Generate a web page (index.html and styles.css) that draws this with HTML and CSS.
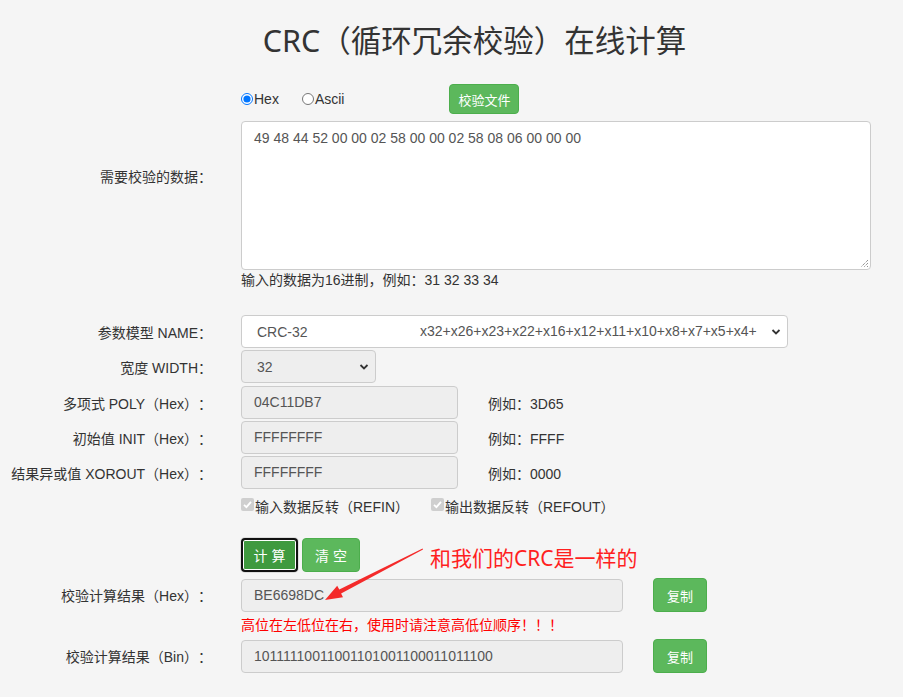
FILE: index.html
```html
<!DOCTYPE html>
<html lang="zh-CN">
<head>
<meta charset="utf-8">
<title>CRC（循环冗余校验）在线计算</title>
<link rel="stylesheet" href="styles.css">
</head>
<body>
<div class="page">
  <h1 class="title">CRC（循环冗余校验）在线计算</h1>

  <div class="row row-data">
    <div class="label label-data">需要校验的数据：</div>
    <div class="ctrl">
      <div class="radio-row">
        <label class="radio"><input type="radio" name="fmt" checked>Hex</label>
        <label class="radio radio-ascii"><input type="radio" name="fmt">Ascii</label>
        <button class="btn btn-file">校验文件</button>
      </div>
      <div class="textarea">49 48 44 52 00 00 02 58 00 00 02 58 08 06 00 00 00
        <svg class="grip" width="10" height="10" viewBox="0 0 10 10"><path d="M9 2 L2 9 M9 5 L5 9 M9 8 L8 9" stroke="#666" stroke-width="1" stroke-dasharray="1 1"/></svg>
      </div>
      <div class="help">输入的数据为16进制，例如：31 32 33 34</div>
    </div>
  </div>

  <div class="row row-name">
    <div class="label">参数模型 NAME：</div>
    <div class="ctrl">
      <div class="select select-name">
        <span class="sel-main">CRC-32</span>
        <span class="sel-poly">x32+x26+x23+x22+x16+x12+x11+x10+x8+x7+x5+x4+</span>
        <svg class="chev" width="10" height="8" viewBox="0 0 10 8"><path d="M1.5 2 L5 5.5 L8.5 2" fill="none" stroke="#333" stroke-width="1.8"/></svg>
      </div>
    </div>
  </div>

  <div class="row row-width">
    <div class="label">宽度 WIDTH：</div>
    <div class="ctrl">
      <div class="select select-width">
        <span class="sel-main">32</span>
        <svg class="chev" width="10" height="8" viewBox="0 0 10 8"><path d="M1.5 2 L5 5.5 L8.5 2" fill="none" stroke="#333" stroke-width="1.8"/></svg>
      </div>
    </div>
  </div>

  <div class="row row-poly">
    <div class="label">多项式 POLY（Hex）：</div>
    <div class="ctrl">
      <div class="input input-short">04C11DB7</div>
      <span class="example">例如：3D65</span>
    </div>
  </div>

  <div class="row row-field">
    <div class="label">初始值 INIT（Hex）：</div>
    <div class="ctrl">
      <div class="input input-short">FFFFFFFF</div>
      <span class="example">例如：FFFF</span>
    </div>
  </div>

  <div class="row row-field">
    <div class="label">结果异或值 XOROUT（Hex）：</div>
    <div class="ctrl">
      <div class="input input-short">FFFFFFFF</div>
      <span class="example">例如：0000</span>
    </div>
  </div>

  <div class="row row-check">
    <div class="label"></div>
    <div class="ctrl">
      <label class="check check-in"><span class="cbox"><svg width="13" height="13" viewBox="0 0 13 13"><path d="M3 6.8 L5.4 9.2 L10 3.8" fill="none" stroke="#fff" stroke-width="1.8"/></svg></span>输入数据反转（REFIN）</label>
      <label class="check"><span class="cbox"><svg width="13" height="13" viewBox="0 0 13 13"><path d="M3 6.8 L5.4 9.2 L10 3.8" fill="none" stroke="#fff" stroke-width="1.8"/></svg></span>输出数据反转（REFOUT）</label>
    </div>
  </div>

  <div class="row row-btns">
    <div class="label"></div>
    <div class="ctrl">
      <button class="btn btn-calc">计 算</button>
      <button class="btn btn-clear">清 空</button>
      <span class="note">和我们的CRC是一样的</span>
      <svg class="arrow" width="110" height="60" viewBox="0 0 110 60"><polygon points="5,56 23,53.2 21.1,49.6 103,5.4 102.6,4.6 19.3,45.6 17.2,41.8" fill="#f42a2a"/></svg>
    </div>
  </div>

  <div class="row row-result">
    <div class="label">校验计算结果（Hex）：</div>
    <div class="ctrl">
      <div class="input input-result">BE6698DC</div>
      <button class="btn btn-copy">复制</button>
    </div>
  </div>
  <div class="row row-warn">
    <div class="label"></div>
    <div class="ctrl warn">高位在左低位在右，使用时请注意高低位顺序！！！</div>
  </div>

  <div class="row row-bin">
    <div class="label">校验计算结果（Bin）：</div>
    <div class="ctrl">
      <div class="input input-result">10111110011001101001100011011100</div>
      <button class="btn btn-copy">复制</button>
    </div>
  </div>
</div>
</body>
</html>
```

FILE: styles.css
```css
html, body {
  margin: 0;
  padding: 0;
  background: #f5f5f5;
}
body {
  font-family: "Liberation Sans", "Noto Sans CJK SC", sans-serif;
  font-size: 14px;
  color: #333;
  text-spacing-trim: space-all;
}
.page {
  width: 903px;
  height: 697px;
  overflow: hidden;
}
.title {
  margin: 20px 0 0 0;
  padding-left: 46px;
  height: 40px;
  line-height: 40px;
  text-align: center;
  font-family: "Noto Sans", "Noto Sans CJK SC", sans-serif;
  font-weight: normal;
  font-size: 30.5px;
  color: #333;
}
.row {
  display: flex;
  align-items: center;
}
.label {
  width: 212px;
  flex: none;
  text-align: right;
  margin-right: 29px;
  white-space: nowrap;
}
.ctrl {
  display: flex;
  align-items: center;
  position: relative;
}
.row-data {
  margin-top: 24px;
  align-items: flex-start;
}
.label-data {
  padding-top: 83px;
  line-height: 20px;
}
.row-data .ctrl {
  flex-direction: column;
  align-items: flex-start;
}
.radio-row {
  display: flex;
  align-items: center;
  height: 30px;
}
.radio {
  display: inline-flex;
  align-items: center;
  font-size: 14px;
  color: #333;
}
.radio input {
  margin: 0 1px 0 0;
  width: 12px;
  height: 12px;
}
.radio-ascii {
  margin-left: 23px;
}
.btn {
  border: 1px solid #4cae4c;
  background: #5cb85c;
  color: #fff;
  border-radius: 4px;
  font-family: "Liberation Sans", "Noto Sans CJK SC", sans-serif;
  font-size: 14px;
  padding: 0;
  cursor: pointer;
}
.btn-file {
  margin-left: 105px;
  width: 70px;
  height: 30px;
  font-size: 13px;
}
.textarea {
  position: relative;
  box-sizing: border-box;
  margin-top: 7px;
  width: 630px;
  height: 149px;
  background: #fff;
  border: 1px solid #ccc;
  border-radius: 4px;
  padding: 7px 12px;
  font-size: 14px;
  color: #555;
  line-height: 18px;
}
.grip {
  position: absolute;
  right: 1px;
  bottom: 1px;
}
.help {
  height: 20px;
  line-height: 20px;
  font-size: 14px;
  color: #333;
}
.row-name {
  margin-top: 25px;
}
.select {
  box-sizing: border-box;
  position: relative;
  display: flex;
  align-items: center;
  height: 33px;
  border: 1px solid #ccc;
  border-radius: 4px;
  color: #555;
  font-size: 14px;
}
.select-name {
  width: 547px;
  background: #fff;
  padding-left: 15px;
}
.sel-poly {
  position: absolute;
  left: 178px;
  top: 7px;
}
.select-width {
  width: 135px;
  background: #eee;
  padding-left: 15px;
}
.chev {
  position: absolute;
  right: 6px;
  top: 12px;
}
.row-width {
  margin-top: 2px;
}
.row-poly {
  margin-top: 3px;
}
.row-field {
  margin-top: 2px;
}
.input {
  box-sizing: border-box;
  height: 33px;
  line-height: 31px;
  border: 1px solid #ccc;
  border-radius: 4px;
  background: #eee;
  color: #555;
  padding-left: 12px;
  font-size: 14px;
}
.input-short {
  width: 217px;
}
.example {
  margin-left: 30px;
  font-size: 14px;
  color: #333;
}
.row-check {
  margin-top: 6px;
  height: 22px;
}
.check {
  display: inline-flex;
  align-items: center;
  font-size: 14px;
  color: #333;
}
.check-in {
  width: 190px;
}
.cbox {
  width: 13px;
  height: 13px;
  border-radius: 2px;
  background: #cfcfcf;
  display: inline-block;
  margin-right: 1px;
  margin-top: -4px;
}
.cbox svg {
  display: block;
}
.row-btns {
  margin-top: 21px;
}
.btn-calc {
  box-sizing: border-box;
  width: 57px;
  height: 34px;
  background: #3f9a3f;
  border: 2px solid #111;
  box-shadow: inset 0 0 0 1px #fff, 0 0 0 1px #ddd;
  font-size: 14px;
}
.btn-clear {
  box-sizing: border-box;
  margin-left: 4px;
  width: 58px;
  height: 34px;
  font-size: 14px;
}
.note {
  position: absolute;
  left: 189px;
  top: 7px;
  font-size: 21px;
  color: #ff1f1f;
  white-space: nowrap;
  font-family: "Noto Sans", "Noto Sans CJK SC", sans-serif;
  line-height: 26px;
}
.arrow {
  position: absolute;
  left: 79px;
  top: 6px;
  z-index: 2;
}
.row-result {
  margin-top: 6px;
}
.input-result {
  width: 382px;
}
.btn-copy {
  margin-left: 30px;
  width: 54px;
  height: 34px;
  font-size: 13px;
}
.row-warn {
  height: 24px;
}
.warn {
  color: #f00;
  font-size: 14px;
}
.row-bin {
  margin-top: 3px;
}
```
